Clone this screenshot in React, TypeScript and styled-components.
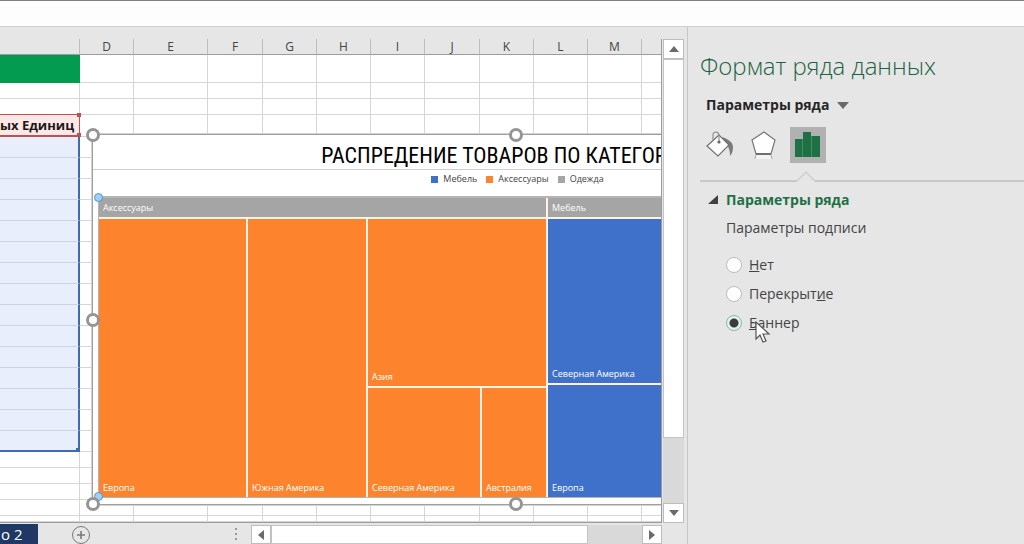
import React, { useState } from 'react';
import styled, { createGlobalStyle, css } from 'styled-components';

const GlobalStyle = createGlobalStyle`
  *, *::before, *::after { box-sizing: border-box; }
  body {
    margin: 0;
    background: #e6e6e6;
    color: #444;
    font-family: 'Open Sans', 'Noto Sans', sans-serif;
  }
  button { padding: 0; border: 0; background: none; font: inherit; color: inherit; }
`;

const Shell = styled.div`
  display: flex;
  flex-direction: column;
  min-height: 100vh;
`;

const FormulaStrip = styled.header`
  height: 27px;
  background: #fdfdfd;
  border-top: 1px solid #7f7f7f;
  border-bottom: 1px solid #d0d0d0;
`;

const Main = styled.main`
  flex: 1;
  display: flex;
`;

const Workspace = styled.section`
  flex: 1;
  min-width: 0;
  display: grid;
  grid-template-columns: minmax(0, 1fr) 21px;
  grid-template-rows: 1fr 21px;
  column-gap: 1px;
  padding: 12px 3px 0 0;
`;

const Sheet = styled.div`
  position: relative;
  overflow: hidden;
  border-right: 1px solid #9c9c9c;
  border-bottom: 1px solid #9c9c9c;
`;

const Grid = styled.table`
  width: 100%;
  table-layout: fixed;
  border-spacing: 0;
  background: #fff;
`;

const ColumnHead = styled.th`
  height: 16px;
  padding: 0;
  background: #e6e6e6;
  border-right: 1px solid #bdbdbd;
  border-bottom: 1px solid #9c9c9c;
  font-size: 12px;
  line-height: 15px;
  font-weight: 400;
  &:last-child { border-right: 0; }
`;

const Row = styled.tr<{ $h: number }>`
  height: ${(p) => p.$h}px;
`;

type Kind = 'plain' | 'green' | 'red' | 'blue' | 'blueEnd';

const Cell = styled.td<{ $kind?: Kind }>`
  position: relative;
  padding: 0;
  border-right: 1px solid #d6d6d6;
  border-bottom: 1px solid #d6d6d6;
  line-height: 1px;
  &:last-child { border-right: 0; }
  ${(p) => p.$kind === 'green' && css`
    background: #039b50;
    border-color: #039b50;
  `}
  ${(p) => p.$kind === 'red' && css`
    background: #fce9e7;
    border-right: 1px solid #c0504d;
    border-bottom: 2px solid #c0504d;
    box-shadow: 0 -1px 0 #c0504d;
    padding-right: 7px;
    color: #1d1717;
    font-size: 13px;
    line-height: 18px;
    font-weight: 700;
    text-align: right;
    white-space: nowrap;
  `}
  ${(p) => (p.$kind === 'blue' || p.$kind === 'blueEnd') && css`
    background: #e8eefc;
    border-right: 2px solid #3f6bb5;
    border-bottom-color: #cdd3e2;
  `}
  ${(p) => p.$kind === 'blueEnd' && css`
    border-bottom: 2px solid #3f6bb5;
  `}
`;

const Grip = styled.i<{ $color: string; $edge: 'top' | 'bottom' }>`
  position: absolute;
  z-index: 1;
  right: -2px;
  ${(p) => p.$edge}: -2px;
  width: 4px;
  height: 4px;
  background: ${(p) => p.$color};
`;

const Chart = styled.figure`
  position: absolute;
  z-index: 2;
  left: 92px;
  top: 95px;
  width: 847px;
  height: 371px;
  margin: 0;
  padding: 0 5px;
  display: flex;
  flex-direction: column;
  background: #fff;
  border: 1px solid #a0a0a0;
  outline: 1px solid #d2d2d2;
`;

const ChartTitle = styled.figcaption`
  height: 35px;
  margin: 0 -5px;
  border-bottom: 1px solid #cfcfcf;
  color: #000;
  font-family: 'Liberation Sans Narrow', 'Roboto Condensed', 'Liberation Sans', sans-serif;
  font-size: 22px;
  line-height: 42px;
  text-align: center;
  white-space: nowrap;
`;

const Legend = styled.ul`
  display: flex;
  justify-content: center;
  gap: 9px;
  height: 26px;
  margin: 0;
  padding: 1px 0 0 4px;
  list-style: none;
  font-size: 9px;
  line-height: 16px;
`;

const LegendItem = styled.li<{ $color: string }>`
  display: flex;
  align-items: center;
  gap: 5px;
  height: 16px;
  &::before {
    content: '';
    width: 7px;
    height: 7px;
    background: ${(p) => p.$color};
  }
`;

const Plot = styled.div`
  position: relative;
  height: 302px;
  display: flex;
  gap: 2px;
  background: #fff2e8;
  border: 1px solid #b4b4b4;
  border-top-width: 2px;
`;

const Group = styled.div<{ $w?: number }>`
  display: flex;
  flex-direction: column;
  gap: 2px;
  ${(p) => (p.$w ? `width: ${p.$w}px;` : 'flex: 1;')}
`;

const Banner = styled.div`
  height: 19px;
  padding: 0 4px;
  background: #a5a5a5;
  color: #fff;
  font-size: 9px;
  line-height: 19px;
`;

const Split = styled.div<{ $dir?: 'row' | 'column'; $w?: number; $h?: number }>`
  display: flex;
  flex-direction: ${(p) => p.$dir || 'row'};
  gap: 2px;
  ${(p) => p.$w ? `width: ${p.$w}px;` : p.$h ? `height: ${p.$h}px;` : 'flex: 1;'}
`;

const Tile = styled.div<{ $color: string; $w?: number; $h?: number }>`
  display: flex;
  align-items: flex-end;
  padding: 0 4px 2px;
  background: ${(p) => p.$color};
  color: #fff;
  font-size: 9px;
  line-height: 14px;
  white-space: nowrap;
  ${(p) => p.$w ? `width: ${p.$w}px;` : p.$h ? `height: ${p.$h}px;` : 'flex: 1;'}
`;

const Handle = styled.span<{ $x: string; $y: string }>`
  position: absolute;
  left: ${(p) => p.$x};
  top: ${(p) => p.$y};
  width: 14px;
  height: 14px;
  margin: -7px;
  border: 3px solid #959595;
  border-radius: 50%;
  background: #fff;
`;

const PlotHandle = styled.span<{ $y: string }>`
  position: absolute;
  left: 0;
  top: ${(p) => p.$y};
  width: 9px;
  height: 9px;
  margin: -5px;
  border: 1px solid #4f93d2;
  border-radius: 50%;
  background: #9fd0f5;
`;

const VScroll = styled.div`
  display: flex;
  flex-direction: column;
`;

const ScrollButton = styled.button`
  display: flex;
  align-items: center;
  justify-content: center;
  flex: 0 0 20px;
  min-width: 19px;
  background: #fff;
  border: 1px solid #bdbdbd;
`;

const Thumb = styled.div<{ $grow: number }>`
  flex: ${(p) => p.$grow} 1 0;
  background: #fff;
  border: 1px solid #c4c4c4;
`;

const Track = styled.div<{ $grow: number }>`
  flex: ${(p) => p.$grow} 1 0;
  background: #d9d9d9;
`;

const BottomBar = styled.div`
  display: flex;
  align-items: stretch;
  min-width: 0;
`;

const SheetTab = styled.button`
  width: 38px;
  margin-top: 1px;
  padding-left: 1px;
  text-align: left;
  background: #203864;
  color: #fff;
  font-size: 15px;
  line-height: 20px;
`;

const AddSheet = styled.button`
  width: 20px;
  height: 20px;
  margin: 2px 0 0 33px;
`;

const Dots = styled.svg`
  margin: 5px 13px 0 auto;
`;

const HScroll = styled.div`
  display: flex;
  width: 411px;
  margin-top: 2px;
`;

const Pane = styled.aside`
  width: 337px;
  padding: 19px 0 0 12px;
  border-left: 1px solid #c6c6c6;
`;

const PaneTitle = styled.h1`
  margin: 0;
  color: #1d6343;
  font-size: 24px;
  line-height: 40px;
  font-weight: 350;
`;

const SeriesMenu = styled.button`
  display: flex;
  align-items: center;
  gap: 8px;
  margin: 9px 0 0 6px;
  color: #262626;
  font-size: 14px;
  line-height: 20px;
  font-weight: 700;
`;

const Tabs = styled.div`
  display: flex;
  gap: 8px;
  margin: 12px 0 0 2px;
`;

const IconTab = styled.button<{ $active?: boolean }>`
  width: 36px;
  height: 36px;
  background: ${(p) => (p.$active ? '#b1b1b1' : 'transparent')};
  svg { display: block; }
`;

const Divider = styled.div`
  position: relative;
  height: 19px;
  border-bottom: 2px solid #c8c8c8;
  svg { position: absolute; left: 97px; bottom: -2px; }
`;

const SectionToggle = styled.button`
  display: flex;
  align-items: center;
  gap: 8px;
  margin: 8px 0 0 8px;
  color: #1e7145;
  font-size: 14px;
  line-height: 20px;
  font-weight: 700;
`;

const Options = styled.fieldset`
  display: flex;
  flex-direction: column;
  gap: 9px;
  margin: 8px 0 0 26px;
  padding: 0;
  border: 0;
  font-size: 14px;
  line-height: 20px;
  legend { padding: 0; margin-bottom: 17px; }
`;

const Option = styled.label`
  position: relative;
  display: flex;
  align-items: center;
  gap: 7px;
`;

const Radio = styled.input`
  appearance: none;
  width: 16px;
  height: 16px;
  margin: 0;
  border: 1px solid #bcbcbc;
  border-radius: 50%;
  background: #fff;
  &:checked {
    border-color: #7fbf9f;
    background: radial-gradient(circle, #3c3c3c 4px, #e3f2ea 5px);
  }
`;

const Pointer = styled.svg`
  position: absolute;
  left: 29px;
  top: 8px;
`;

const ORANGE = '#fd842d';
const BLUE = '#4071ca';
const GREY = '#a5a5a5';

const columns: [string, number | undefined][] = [
  ['', 80], ['D', 54], ['E', 74], ['F', 55], ['G', 54], ['H', 54], ['I', 54],
  ['J', 55], ['K', 54], ['L', 54], ['M', 54], ['', undefined],
];

const rows: { h: number; kind: Kind }[] = [
  { h: 28, kind: 'green' },
  { h: 16, kind: 'plain' },
  { h: 16, kind: 'plain' },
  { h: 22, kind: 'red' },
  ...Array.from({ length: 14 }, () => ({ h: 21, kind: 'blue' as Kind })),
  { h: 21, kind: 'blueEnd' },
  ...Array.from({ length: 4 }, () => ({ h: 16, kind: 'plain' as Kind })),
  { h: 6, kind: 'plain' },
];

const arrows = {
  up: '0,6 10,6 5,0',
  down: '0,0 10,0 5,6',
  left: '6,0 6,10 0,5',
  right: '0,0 0,10 6,5',
};

function Arrow({ dir }: { dir: keyof typeof arrows }) {
  const tall = dir === 'left' || dir === 'right';
  return (
    <svg width={tall ? 6 : 10} height={tall ? 10 : 6} aria-hidden>
      <polygon points={arrows[dir]} fill="#6a6a6a" />
    </svg>
  );
}

function SheetGrid() {
  return (
    <Grid>
      <colgroup>
        {columns.map(([, w], i) => <col key={i} width={w} />)}
      </colgroup>
      <thead>
        <tr>{columns.map(([name], i) => <ColumnHead key={i} scope="col">{name}</ColumnHead>)}</tr>
      </thead>
      <tbody>
        {rows.map((row, r) => (
          <Row key={r} $h={row.h}>
            {columns.map((_, c) => (
              <Cell key={c} $kind={c === 0 ? row.kind : 'plain'}>
                {c === 0 && row.kind === 'red' && (
                  <>
                    ых Единиц
                    <Grip $color="#c0504d" $edge="top" />
                    <Grip $color="#c0504d" $edge="bottom" />
                  </>
                )}
                {c === 0 && row.kind === 'blueEnd' && <Grip $color="#3f6bb5" $edge="bottom" />}
              </Cell>
            ))}
          </Row>
        ))}
      </tbody>
    </Grid>
  );
}

function Treemap() {
  return (
    <Chart>
      <ChartTitle>РАСПРЕДЕНИЕ ТОВАРОВ ПО КАТЕГОРИЯМ</ChartTitle>
      <Legend>
        <LegendItem $color={BLUE}>Мебель</LegendItem>
        <LegendItem $color={ORANGE}>Аксессуары</LegendItem>
        <LegendItem $color={GREY}>Одежда</LegendItem>
      </Legend>
      <Plot>
        <Group $w={447}>
          <Banner>Аксессуары</Banner>
          <Split>
            <Tile $color={ORANGE} $w={147}>Европа</Tile>
            <Tile $color={ORANGE} $w={118}>Южная Америка</Tile>
            <Split $dir="column">
              <Tile $color={ORANGE}>Азия</Tile>
              <Split $h={109}>
                <Tile $color={ORANGE} $w={112}>Северная Америка</Tile>
                <Tile $color={ORANGE}>Австралия</Tile>
              </Split>
            </Split>
          </Split>
        </Group>
        <Group>
          <Banner>Мебель</Banner>
          <Split $dir="column">
            <Tile $color={BLUE}>Северная Америка</Tile>
            <Tile $color={BLUE} $h={112}>Европа</Tile>
          </Split>
        </Group>
        <PlotHandle $y="0%" />
        <PlotHandle $y="100%" />
      </Plot>
      {['0%', '50%'].map((x) => ['0%', '50%', '100%'].map((y) => (
        (x === '0%' || y !== '50%') && <Handle key={x + y} $x={x} $y={y} />
      )))}
    </Chart>
  );
}

function FillIcon() {
  return (
    <svg width="36" height="36" fill="none" aria-hidden>
      <path d="M20 10C26 12 31 15 31 20C31 24 30 27 28 29C28 24 27 21 25 18Z" fill="#7b7b7b" />
      <path d="M5 19L17 8L27 18L16 29Z" fill="#fff" stroke="#707070" strokeWidth="1.2" />
      <path d="M11 13V8c0-4 5-4 6 0v7" stroke="#8a8a8a" strokeWidth="1.1" />
      <circle cx="17" cy="15" r="1.6" fill="#666" />
    </svg>
  );
}

function EffectsIcon() {
  return (
    <svg width="36" height="36" fill="none" aria-hidden>
      <path d="M10 28H25L26 32H9Z" fill="#f4f4f4" />
      <path d="M18 5L29 13L25 27H10L6 13Z" fill="#fff" stroke="#767676" strokeWidth="1.2" />
      <path d="M10 27H25" stroke="#5f5f5f" strokeWidth="1.6" />
      <path d="M10 28L9 32M25 28L26 32" stroke="#a8a8a8" />
    </svg>
  );
}

function SeriesIcon() {
  return (
    <svg width="36" height="36" aria-hidden>
      <path d="M5 12H12V30H5ZM13 5H21V30H13ZM22 9H30V30H22Z" fill="#1e7145" />
      <path d="M12 12H13V30H12ZM21 9H22V30H21Z" fill="#4b8a68" />
    </svg>
  );
}

const choices = [
  { id: 'none', label: <span><u>Н</u>ет</span> },
  { id: 'overlap', label: <span>Перекрыт<u>и</u>е</span> },
  { id: 'banner', label: <span><u>Б</u>аннер</span> },
];

function FormatPane() {
  const [choice, setChoice] = useState('banner');
  return (
    <Pane>
      <PaneTitle>Формат ряда данных</PaneTitle>
      <SeriesMenu>
        Параметры ряда
        <svg width="12" height="7" aria-hidden><polygon points="0,0 12,0 6,7" fill="#6a6a6a" /></svg>
      </SeriesMenu>
      <Tabs>
        <IconTab aria-label="Заливка и границы"><FillIcon /></IconTab>
        <IconTab aria-label="Эффекты"><EffectsIcon /></IconTab>
        <IconTab aria-label="Параметры ряда" $active><SeriesIcon /></IconTab>
      </Tabs>
      <Divider>
        <svg width="18" height="12" aria-hidden>
          <path d="M0 12V11L9 2L18 11V12Z" fill="#e6e6e6" />
          <path d="M0 11L9 2L18 11" fill="none" stroke="#cdcdcd" strokeWidth="1.5" />
        </svg>
      </Divider>
      <SectionToggle aria-expanded>
        <svg width="10" height="10" aria-hidden><polygon points="10,0 10,9 0,9" fill="#404040" /></svg>
        Параметры ряда
      </SectionToggle>
      <Options>
        <legend>Параметры подписи</legend>
        {choices.map(({ id, label }) => (
          <Option key={id}>
            <Radio type="radio" name="caption" checked={choice === id} onChange={() => setChoice(id)} />
            {label}
            {id === 'banner' && (
              <Pointer width="16" height="24" aria-hidden>
                <path d="M1 1V18L5 14L8 21L11 20L8 13H14Z" fill="#fff" stroke="#555" strokeWidth="1.2" />
              </Pointer>
            )}
          </Option>
        ))}
      </Options>
    </Pane>
  );
}

export default function App() {
  return (
    <Shell>
      <GlobalStyle />
      <FormulaStrip />
      <Main>
        <Workspace>
          <Sheet>
            <SheetGrid />
            <Treemap />
          </Sheet>
          <VScroll>
            <ScrollButton aria-label="Вверх"><Arrow dir="up" /></ScrollButton>
            <Thumb $grow={379} />
            <Track $grow={65} />
            <ScrollButton aria-label="Вниз"><Arrow dir="down" /></ScrollButton>
          </VScroll>
          <BottomBar>
            <SheetTab>о 2</SheetTab>
            <AddSheet aria-label="Новый лист">
              <svg width="20" height="20" fill="none" stroke="#7a7a7a" aria-hidden>
                <circle cx="10" cy="10" r="8.5" />
                <path d="M10 6V14M6 10H14" strokeWidth="1.6" />
              </svg>
            </AddSheet>
            <Dots width="4" height="14" fill="#999" aria-hidden>
              <rect x="1" y="0" width="2" height="2" />
              <rect x="1" y="5" width="2" height="2" />
              <rect x="1" y="10" width="2" height="2" />
            </Dots>
            <HScroll>
              <ScrollButton aria-label="Влево"><Arrow dir="left" /></ScrollButton>
              <Thumb $grow={318} />
              <Track $grow={54} />
              <ScrollButton aria-label="Вправо"><Arrow dir="right" /></ScrollButton>
            </HScroll>
          </BottomBar>
        </Workspace>
        <FormatPane />
      </Main>
    </Shell>
  );
}
